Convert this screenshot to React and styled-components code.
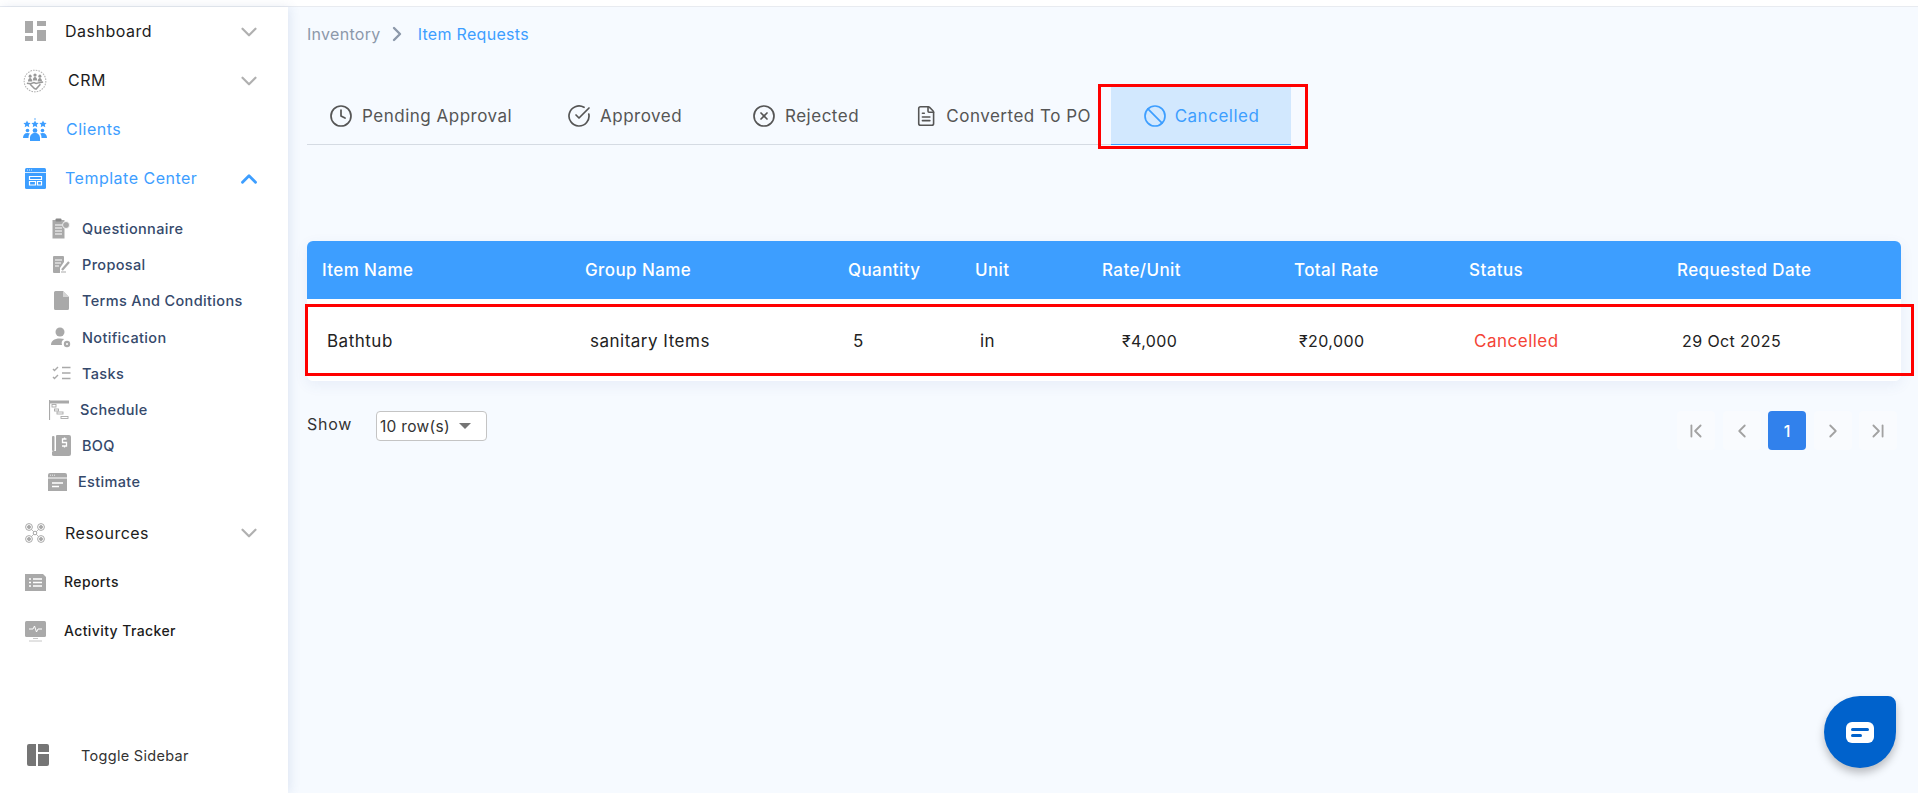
import styled, { createGlobalStyle } from "styled-components";
import { ChevronDown, ChevronUp, ChevronRight, ChevronLeft, ChevronFirst, ChevronLast, Clock, CircleCheckBig, CircleX, FileText, Ban } from "lucide-react";

const GlobalStyle = createGlobalStyle`
    html, body { margin: 0; padding: 0; height: 100%; }
    body { font-family: Inter, "Noto Sans", sans-serif; background: #f6faff; overflow: hidden; }
    #root { height: 100%; }
    * { box-sizing: border-box; }
`;

const GRAY = "#a9a9a9";

const DashboardIcon = () => (
    <svg width="21" height="21" viewBox="0 0 21 21" fill={GRAY}>
        <rect x="0" y="0" width="8" height="12" /><rect x="0" y="15" width="8" height="5" />
        <rect x="12" y="0" width="9" height="5" /><rect x="12" y="9" width="9" height="11" />
    </svg>
);
const CrmIcon = () => (
    <svg width="24" height="26" viewBox="0 0 22 24" fill="#999">
        <circle cx="11" cy="12" r="10" fill="none" stroke="#b4b4b4" strokeWidth="1" strokeDasharray="1.500 1" />
        <circle cx="6.500" cy="7.500" r="1.400" /><circle cx="11" cy="6.500" r="1.500" /><circle cx="15.500" cy="7.500" r="1.400" />
        <path d="M4.500 12.500c0-2 1-3.200 2-3.200s2 1.200 2 3.200zM9 11.500c0-2 .8-3.300 2-3.300s2 1.300 2 3.300zM13.500 12.500c0-2 1-3.200 2-3.200s2 1.200 2 3.200z" />
        <path d="M3.500 14l3.500.5 3-1 2 .8 3-.8 3.500-.5M6.500 15l4 4 1.500.5 4-4.500" fill="none" stroke="#999" strokeWidth="1.400" />
    </svg>
);
const ClientsIcon = () => (
    <svg width="24" height="23" viewBox="0 0 24 23" fill="#3d9eff">
        <path d="M4 2.500l1.100 2.300 2.500.3-1.800 1.700.5 2.500L4 8.100 1.700 9.300l.5-2.500L.4 5.100l2.500-.3zM12 2.500l1.100 2.300 2.500.3-1.800 1.700.5 2.500L12 8.100 9.700 9.300l.5-2.500-1.800-1.700 2.500-.3zM20 2.500l1.100 2.300 2.500.3-1.800 1.700.5 2.500L20 8.100l-2.300 1.200.5-2.500-1.800-1.700 2.500-.3z" />
        <rect x="11.600" y="0" width="0.8" height="2" />
        <circle cx="4.500" cy="12.500" r="1.800" /><circle cx="12" cy="12.500" r="2.300" /><circle cx="19.500" cy="12.500" r="1.800" />
        <path d="M0 20c0-3 1.500-5 4.500-5 1 0 1.800.2 2.400.6C5.800 16.800 5.500 18.300 5.500 20zM24 20c0-3-1.500-5-4.500-5-1 0-1.800.2-2.400.6 1.100 1.200 1.400 2.700 1.400 4.400zM7 23v-3c0-3 2-5 5-5s5 2 5 5v3z" />
    </svg>
);
const TemplateIcon = () => (
    <svg width="21" height="21" viewBox="0 0 21 21">
        <rect width="21" height="21" rx="1.500" fill="#3d9eff" />
        <rect x="0" y="4" width="21" height="0.8" fill="#fff" />
        <path d="M2 2h1M4 2h1M6 2h1" stroke="#fff" strokeWidth="0.8" />
        <path d="M4.500 8.500h12v3h-12zM4.500 13.500h6v3.500h-6zM12.500 13.500h4v3.500h-4z" fill="none" stroke="#fff" strokeWidth="1.200" />
    </svg>
);
const QuestionnaireIcon = () => (
    <svg width="18" height="21" viewBox="0 0 18 21">
        <rect x="0.500" y="2" width="12" height="18.500" fill={GRAY} />
        <rect x="3.500" y="0.500" width="6" height="3" rx="1" fill="#888" />
        <path d="M3 7h7M3 10h7M3 13h7M3 16h7" stroke="#fff" strokeWidth="1" />
        <circle cx="14" cy="7" r="3.500" fill={GRAY} stroke="#fff" strokeWidth="0.800" />
    </svg>
);
const ProposalIcon = () => (
    <svg width="19" height="19" viewBox="0 0 19 19">
        <path d="M1 2a1 1 0 0 1 1-1h9a1 1 0 0 1 1 1v5l-4 6v5H2a1 1 0 0 1-1-1z" fill={GRAY} />
        <path d="M3 5h7M3 8h6M3 11h4" stroke="#fff" strokeWidth="1.100" />
        <path d="M10 15l7-8" stroke={GRAY} strokeWidth="2.200" />
        <path d="M9 17h5" stroke={GRAY} strokeWidth="1" />
    </svg>
);
const TermsIcon = () => (
    <svg width="15" height="19" viewBox="0 0 15 19" fill={GRAY}>
        <path d="M1.500 0H9l6 6v11.500a1.500 1.500 0 0 1-1.500 1.500h-12A1.500 1.500 0 0 1 0 17.500v-16A1.500 1.500 0 0 1 1.500 0z" />
        <path d="M9 0v6h6z" fill="#d4d4d4" />
    </svg>
);
const NotificationIcon = () => (
    <svg width="20" height="21" viewBox="0 0 20 21" fill={GRAY}>
        <circle cx="9" cy="5" r="4.500" />
        <path d="M0 18c0-4 3-6.500 9-6.500 1.500 0 3 .2 4.200.6A5 5 0 0 0 11 18z" />
        <circle cx="16" cy="17" r="3.200" /><circle cx="16" cy="17" r="1" fill="#fff" />
    </svg>
);
const TasksIcon = () => (
    <svg width="19" height="14" viewBox="0 0 19 14" fill="none" stroke={GRAY}>
        <path d="M1 3l1.500 1.500L6 1M1 11l1.500 1.500L6 9" strokeWidth="1.400" />
        <path d="M10 1.500h8.500M10 7h8.500M10 12.500h8.500" strokeWidth="1.300" />
    </svg>
);
const ScheduleIcon = () => (
    <svg width="20" height="20" viewBox="0 0 20 20" fill="none" stroke={GRAY}>
        <path d="M.500 0v20" strokeWidth="1.200" />
        <rect x="1" y="0.500" width="19" height="3" fill={GRAY} stroke="none" />
        <rect x="3" y="4.500" width="4" height="2.500" strokeWidth="0.900" />
        <rect x="5.500" y="9" width="4" height="2" strokeWidth="0.900" />
        <rect x="8" y="12" width="6" height="2" strokeWidth="0.900" />
        <rect x="12" y="16.500" width="7" height="2" strokeWidth="0.900" />
    </svg>
);
const BoqIcon = () => (
    <svg width="19" height="21" viewBox="0 0 19 21" fill={GRAY}>
        <rect x="0" y="1" width="2.500" height="15" rx="1" />
        <path d="M5 0h12a2 2 0 0 1 2 2v14H4V1a1 1 0 0 1 1-1z" />
        <path d="M2 21a2.500 2.500 0 0 1 0-5h17v3a2 2 0 0 1-2 2z" />
        <path d="M14.500 4h-4v3.500h4V11h-4.500M12.500 2.500v1.500M12.500 11v1.500" fill="none" stroke="#fff" strokeWidth="1.300" />
    </svg>
);
const EstimateIcon = () => (
    <svg width="19" height="18" viewBox="0 0 19 18" fill={GRAY}>
        <path d="M2 0h15a2 2 0 0 1 2 2v2.500H0V2a2 2 0 0 1 2-2zM0 5.500h19V18H0z" />
        <path d="M2 2.200h1M4 2.200h1M6 2.200h1" stroke="#fff" strokeWidth="0.800" />
        <path d="M4 10h11M4 13.500h7" stroke="#fff" strokeWidth="1.300" />
    </svg>
);
const ResourcesIcon = () => (
    <svg width="20" height="20" viewBox="0 0 20 20" fill="none" stroke={GRAY}>
        <path d="M6 6l8 8M14 6l-8 8" strokeWidth="0.800" />
        <circle cx="4" cy="4" r="3.400" fill="#fff" /><circle cx="16" cy="4" r="3.400" fill="#fff" /><circle cx="4" cy="16" r="3.400" fill="#fff" /><circle cx="16" cy="16" r="3.400" fill="#fff" />
        <circle cx="10" cy="10" r="1.800" fill="#fff" />
        <circle cx="4" cy="4" r="1.500" fill={GRAY} /><circle cx="16" cy="4" r="1.500" fill={GRAY} /><circle cx="4" cy="16" r="1.500" fill={GRAY} /><circle cx="16" cy="16" r="1.500" fill={GRAY} />
    </svg>
);
const ReportsIcon = () => (
    <svg width="21" height="17" viewBox="0 0 21 17" fill={GRAY}>
        <path d="M0 0h18l3 3v14H0z" />
        <path d="M4 5h2M4 8.500h2M4 12h2M8 5h9M8 8.500h9M8 12h9" stroke="#fff" strokeWidth="1.400" />
    </svg>
);
const ActivityIcon = () => (
    <svg width="21" height="21" viewBox="0 0 21 21" fill={GRAY}>
        <rect width="21" height="16" rx="1.500" />
        <path d="M4 8h4l1.500-3 2 6 1.500-3h4" fill="none" stroke="#fff" strokeWidth="1" />
        <path d="M8 17.500h5M4 20h13" stroke="#c6c6c6" strokeWidth="1" />
    </svg>
);
const ToggleIcon = () => (
    <svg width="22" height="22" viewBox="0 0 22 22" fill="#757575">
        <path d="M2 0h7v22H2a2 2 0 0 1-2-2V2a2 2 0 0 1 2-2zM11 0h9a2 2 0 0 1 2 2v6H11zM11 10h11v10a2 2 0 0 1-2 2h-9z" />
    </svg>
);

const subItems = [
    { label: "Questionnaire", icon: <QuestionnaireIcon />, x: 0 },
    { label: "Proposal", icon: <ProposalIcon />, x: 0 },
    { label: "Terms And Conditions", icon: <TermsIcon />, x: 0 },
    { label: "Notification", icon: <NotificationIcon />, x: 0 },
    { label: "Tasks", icon: <TasksIcon />, x: 0 },
    { label: "Schedule", icon: <ScheduleIcon />, x: -2 },
    { label: "BOQ", icon: <BoqIcon />, x: 0 },
    { label: "Estimate", icon: <EstimateIcon />, x: -4 },
];

const tabs = [
    { label: "Pending Approval", icon: <Clock size={24} strokeWidth={1.7} />, width: 238 },
    { label: "Approved", icon: <CircleCheckBig size={24} strokeWidth={1.7} />, width: 185 },
    { label: "Rejected", icon: <CircleX size={24} strokeWidth={1.7} />, width: 163 },
    { label: "Converted To PO", icon: <FileText size={24} strokeWidth={1.7} />, width: 198 },
];

const columns = [
    { head: "Item Name", value: "Bathtub" },
    { head: "Group Name", value: "sanitary Items" },
    { head: "Quantity", value: "5" },
    { head: "Unit", value: "in" },
    { head: "Rate/Unit", value: "₹4,000", numeric: true, indent: 35 },
    { head: "Total Rate", value: "₹20,000", numeric: true },
    { head: "Status", value: "Cancelled", danger: true },
    { head: "Requested Date", value: "29 Oct 2025", numeric: true },
];

export default function App() {
    return (
        <Page>
            <GlobalStyle />
            <TopBand />
            <Body>
                <Sidebar>
                    <NavRow><IconSlot><DashboardIcon /></IconSlot><NavLabel>Dashboard</NavLabel><Caret><ChevronDown size={26} /></Caret></NavRow>
                    <NavRow><IconSlot><CrmIcon /></IconSlot><NavLabel $shift={3}>CRM</NavLabel><Caret><ChevronDown size={26} /></Caret></NavRow>
                    <NavRow $active><IconSlot><ClientsIcon /></IconSlot><NavLabel $shift={1}>Clients</NavLabel></NavRow>
                    <NavRow $active><IconSlot><TemplateIcon /></IconSlot><NavLabel>Template Center</NavLabel><Caret $active><ChevronUp size={26} strokeWidth={2.6} /></Caret></NavRow>
                    <SubList>
                        {subItems.map((item) => (
                            <SubRow key={item.label} $shift={item.x}>
                                <SubIcon>{item.icon}</SubIcon>
                                <span>{item.label}</span>
                            </SubRow>
                        ))}
                    </SubList>
                    <NavRow><IconSlot><ResourcesIcon /></IconSlot><NavLabel>Resources</NavLabel><Caret><ChevronDown size={26} /></Caret></NavRow>
                    <NavRow $small><IconSlot><ReportsIcon /></IconSlot><NavLabel $shift={-1}>Reports</NavLabel></NavRow>
                    <NavRow $small><IconSlot><ActivityIcon /></IconSlot><NavLabel $shift={-1}>Activity Tracker</NavLabel></NavRow>
                    <ToggleRow><ToggleIcon /><span>Toggle Sidebar</span></ToggleRow>
                </Sidebar>
                <Main>
                    <Crumbs>
                        <span>Inventory</span>
                        <ChevronRight size={24} strokeWidth={2.4} />
                        <CrumbCurrent>Item Requests</CrumbCurrent>
                    </Crumbs>
                    <TabBar>
                        {tabs.map((tab) => (
                            <Tab key={tab.label} $width={tab.width}>{tab.icon}<span>{tab.label}</span></Tab>
                        ))}
                        <ActiveTab><Ban size={24} strokeWidth={1.7} /><span>Cancelled</span></ActiveTab>
                    </TabBar>
                    <Table>
                        <HeadRow>
                            {columns.map((col) => <HeadCell key={col.head}>{col.head}</HeadCell>)}
                        </HeadRow>
                        <DataRow>
                            {columns.map((col) => (
                                <DataCell key={col.head} $danger={col.danger} $numeric={col.numeric} $indent={col.indent}>{col.value}</DataCell>
                            ))}
                        </DataRow>
                    </Table>
                    <Footer>
                        <ShowBox>
                            <ShowLabel>Show</ShowLabel>
                            <RowSelect>10 row(s)<Arrow /></RowSelect>
                        </ShowBox>
                        <Pager>
                            <PageBtn><ChevronFirst size={22} /></PageBtn>
                            <PageBtn><ChevronLeft size={22} /></PageBtn>
                            <PageBtn $current>1</PageBtn>
                            <PageBtn><ChevronRight size={22} /></PageBtn>
                            <PageBtn><ChevronLast size={22} /></PageBtn>
                        </Pager>
                    </Footer>
                </Main>
            </Body>
            <TabMark />
            <RowMark />
            <ChatBubble>
                <svg width="28" height="21" viewBox="0 0 28 21">
                    <rect width="28" height="21" rx="6" fill="#fff" />
                    <rect x="5" y="6" width="18" height="3" rx="1.500" fill="#0062cc" />
                    <rect x="5" y="12" width="11" height="3" rx="1.500" fill="#0062cc" />
                </svg>
            </ChatBubble>
        </Page>
    );
}

const Page = styled.div`
    position: relative;
    display: flex;
    flex-direction: column;
    width: 1918px;
    height: 793px;
    overflow: hidden;
    background: #f6faff;
`;

const TopBand = styled.header`
    flex: none;
    height: 7px;
    background: #fff;
    border-bottom: 1px solid #e8ebf0;
`;

const Body = styled.div`
    display: flex;
    flex: 1;
    min-height: 0;
`;

const Sidebar = styled.aside`
    flex: none;
    display: flex;
    flex-direction: column;
    width: 288px;
    background: #fff;
    box-shadow: 2px 0 10px rgba(60, 90, 160, 0.12);
`;

const NavRow = styled.div`
    display: flex;
    align-items: center;
    flex: none;
    height: 49px;
    padding-left: 23px;
    color: ${(p) => (p.$active ? "#3d9eff" : "#1c1c1c")};
    font-size: ${(p) => (p.$small ? "14px" : "16px")};
    font-weight: ${(p) => (p.$small ? 500 : 400)};
    letter-spacing: ${(p) => (p.$small ? "0.4px" : "0.5px")};
`;

const IconSlot = styled.span`
    display: flex;
    justify-content: center;
    align-items: center;
    width: 24px;
    height: 24px;
`;

const NavLabel = styled.span`
    margin-left: ${(p) => 18 + (p.$shift || 0)}px;
    margin-top: -1px;
`;

const Caret = styled.span`
    display: flex;
    margin-left: auto;
    margin-right: 26px;
    color: ${(p) => (p.$active ? "#3d9eff" : "#b0b0b0")};
`;

const SubList = styled.div`
    display: flex;
    flex-direction: column;
    flex: none;
    padding: 7.5px 0 8.5px;
`;

const SubRow = styled.div`
    display: flex;
    align-items: center;
    height: 36.2px;
    padding-left: ${(p) => 50 + p.$shift}px;
    color: #35496b;
    font-size: 14.5px;
    font-weight: 500;
    letter-spacing: 0.35px;
`;

const SubIcon = styled.span`
    display: flex;
    justify-content: center;
    align-items: center;
    width: 22px;
    margin-right: 10px;
`;

const ToggleRow = styled.div`
    display: flex;
    align-items: center;
    gap: 32px;
    margin-top: auto;
    margin-bottom: 27px;
    padding-left: 27px;
    color: #333;
    font-size: 14.5px;
    letter-spacing: 0.3px;
`;

const Main = styled.main`
    flex: 1;
    min-width: 0;
    padding: 0 17px 0 19px;
`;

const Crumbs = styled.nav`
    display: flex;
    align-items: center;
    gap: 4px;
    height: 54px;
    color: #8c98aa;
    font-size: 16px;
    letter-spacing: 0.3px;
`;

const CrumbCurrent = styled.span`
    margin-left: 5px;
    color: #3d9eff;
`;

const TabBar = styled.div`
    display: flex;
    height: 58px;
    margin-top: 26px;
    width: 984px;
    border-bottom: 1px solid #d5dbe3;
`;

const Tab = styled.div`
    display: flex;
    align-items: center;
    gap: 9px;
    width: ${(p) => p.$width}px;
    padding: 1px 0 0 22px;
    color: #555;
    font-size: 17px;
    letter-spacing: 0.5px;
    white-space: nowrap;
`;

const ActiveTab = styled(Tab)`
    justify-content: center;
    gap: 8px;
    width: 180px;
    margin-left: auto;
    padding: 1px 0 0;
    color: #3d9eff;
    background: #d2e8fe;
    border-bottom: 1px solid #3d9eff;
    margin-bottom: -1px;
`;

const Table = styled.section`
    margin-top: 96px;
    border-radius: 6px;
    box-shadow: 0 4px 14px rgba(60, 90, 160, 0.08);
`;

const tableColumns = "263px 263px 127px 127px 192px 175px 208px 1fr";

const HeadRow = styled.div`
    display: grid;
    grid-template-columns: ${tableColumns};
    align-items: center;
    height: 58px;
    background: #3d9eff;
    border-radius: 6px 6px 0 0;
`;

const HeadCell = styled.div`
    padding-left: 15px;
    color: #fff;
    font-size: 17px;
    font-weight: 500;
    letter-spacing: 0.4px;
`;

const DataRow = styled.div`
    display: grid;
    grid-template-columns: ${tableColumns};
    align-items: center;
    height: 82px;
    padding-top: 1px;
    background: #fff;
    border-radius: 0 0 6px 6px;
`;

const DataCell = styled.div`
    padding-left: ${(p) => p.$indent || 20}px;
    color: ${(p) => (p.$danger ? "#f44336" : "#222")};
    font-size: ${(p) => (p.$numeric ? "16px" : "17px")};
    letter-spacing: ${(p) => (p.$numeric ? "0.4px" : "0.5px")};
`;

const Footer = styled.div`
    display: flex;
    justify-content: space-between;
    align-items: flex-start;
    margin-top: 30px;
`;

const ShowBox = styled.div`
    display: flex;
    align-items: flex-start;
    gap: 24px;
    color: #333;
`;

const ShowLabel = styled.span`
    width: 45px;
    padding-top: 3px;
    font-size: 16px;
    letter-spacing: 0.7px;
`;

const RowSelect = styled.div`
    display: flex;
    align-items: center;
    justify-content: space-between;
    width: 111px;
    height: 30px;
    padding: 0 15px 0 3px;
    background: #fff;
    border: 1px solid #c4c4c4;
    border-radius: 4px;
    font-size: 15.5px;
    letter-spacing: 0.3px;
`;

const Arrow = styled.i`
    width: 0;
    height: 0;
    border-style: solid;
    border-width: 6px 6px 0;
    border-color: #757575 transparent transparent;
`;

const Pager = styled.div`
    display: flex;
    gap: 7.5px;
    margin-right: 4px;
`;

const PageBtn = styled.div`
    display: flex;
    justify-content: center;
    align-items: center;
    width: 38px;
    height: 39px;
    border-radius: 4px;
    background: ${(p) => (p.$current ? "#3181ec" : "#f9fbfe")};
    color: ${(p) => (p.$current ? "#fff" : "#a2a2a2")};
    font-size: 16px;
    font-weight: 500;
`;

const TabMark = styled.div`
    position: absolute;
    left: 1098px;
    top: 84px;
    width: 210px;
    height: 65px;
    border: 3px solid #f00;
    pointer-events: none;
`;

const RowMark = styled.div`
    position: absolute;
    left: 305px;
    top: 304px;
    width: 1609px;
    height: 72px;
    border: 3px solid #f00;
    pointer-events: none;
`;

const ChatBubble = styled.div`
    position: absolute;
    left: 1824px;
    top: 696px;
    display: flex;
    justify-content: center;
    align-items: center;
    width: 72px;
    height: 72px;
    background: #0062cc;
    border-radius: 50% 8px 50% 50%;
    box-shadow: 0 5px 9px rgba(0, 0, 0, 0.25);
`;
